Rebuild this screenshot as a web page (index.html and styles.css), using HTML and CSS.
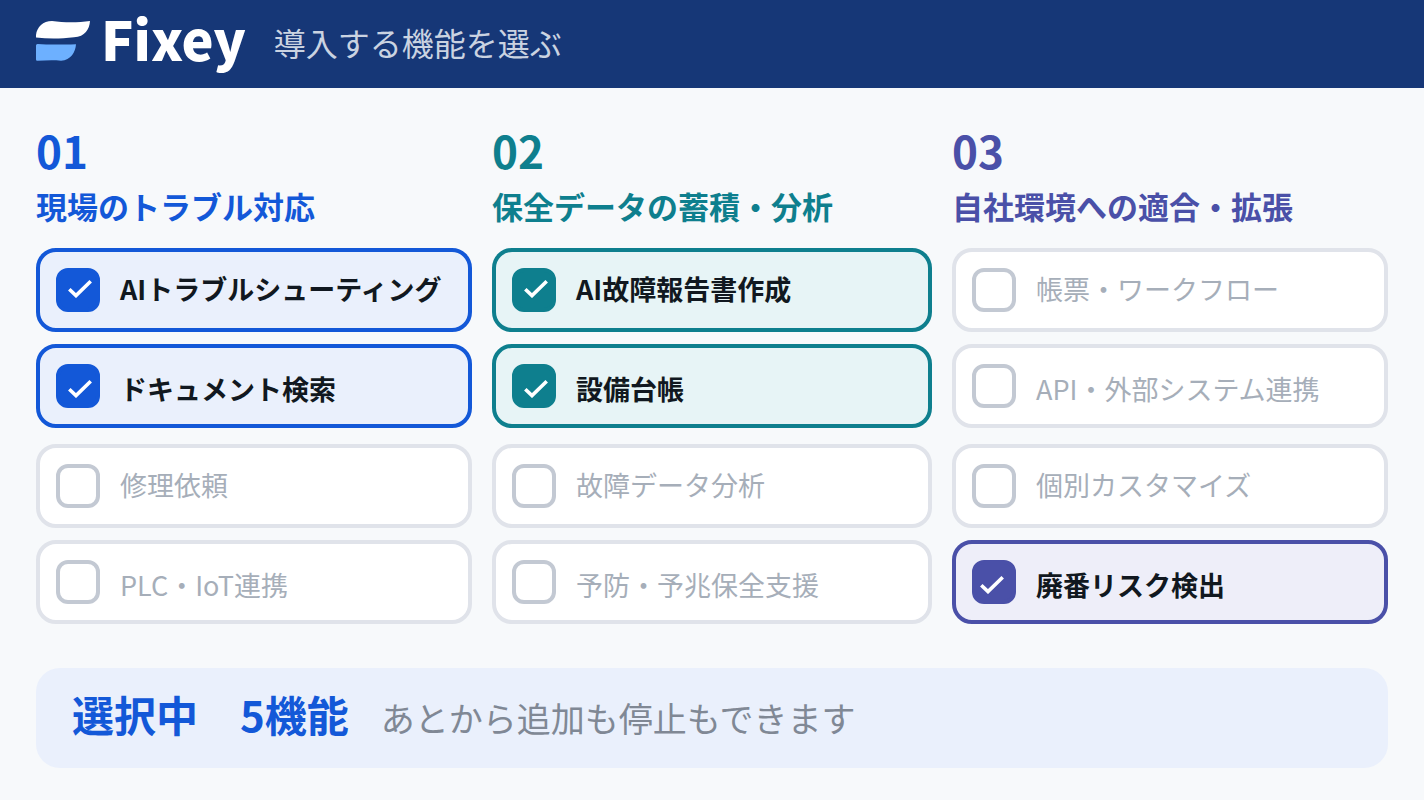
FILE: index.html
```
<!DOCTYPE html>
<html lang="ja">
<head>
<meta charset="utf-8">
<meta name="viewport" content="width=device-width, initial-scale=1">
<title>Fixey 導入する機能を選ぶ</title>
<link rel="stylesheet" href="styles.css">
</head>
<body>
<svg class="sprite" aria-hidden="true">
  <symbol id="tick" viewBox="0 0 24 18"><path d="M1.300 9.200L8 15.600L22.700 1.300"/></symbol>
</svg>
<header class="topbar">
  <svg class="logo" viewBox="0 0 54 42" aria-hidden="true">
    <path class="logo-upper" d="M0 17.500V15C1 7 7 1 16 1C28 2.700 42 2.700 54 1C53.500 9 49 17 38 17.300C24 19 12 19 0 17.500Z"/>
    <path class="logo-lower" d="M1.500 24C14 25 28 24.500 40 24.200C39.500 32 35 40 25 40.800C17 40 9 40.500 1.500 40.800Q0 41 0 39.500V25.500Q0 24 1.500 24Z"/>
  </svg>
  <span class="brand">Fixey</span>
  <h1 class="title">導入する機能を選ぶ</h1>
</header>
<main class="page">
  <div class="columns">
    <section class="group group-blue">
      <p class="number">01</p>
      <h2 class="heading">現場のトラブル対応</h2>
      <ul class="options">
        <li><label class="option"><span class="box"><input type="checkbox" checked><svg class="tick" aria-hidden="true"><use href="#tick"/></svg></span><span class="name">AIトラブルシューティング</span></label></li>
        <li><label class="option"><span class="box"><input type="checkbox" checked><svg class="tick" aria-hidden="true"><use href="#tick"/></svg></span><span class="name">ドキュメント検索</span></label></li>
        <li><label class="option"><span class="box"><input type="checkbox"><svg class="tick" aria-hidden="true"><use href="#tick"/></svg></span><span class="name">修理依頼</span></label></li>
        <li><label class="option"><span class="box"><input type="checkbox"><svg class="tick" aria-hidden="true"><use href="#tick"/></svg></span><span class="name">PLC・IoT連携</span></label></li>
      </ul>
    </section>
    <section class="group group-teal">
      <p class="number">02</p>
      <h2 class="heading">保全データの蓄積・分析</h2>
      <ul class="options">
        <li><label class="option"><span class="box"><input type="checkbox" checked><svg class="tick" aria-hidden="true"><use href="#tick"/></svg></span><span class="name">AI故障報告書作成</span></label></li>
        <li><label class="option"><span class="box"><input type="checkbox" checked><svg class="tick" aria-hidden="true"><use href="#tick"/></svg></span><span class="name">設備台帳</span></label></li>
        <li><label class="option"><span class="box"><input type="checkbox"><svg class="tick" aria-hidden="true"><use href="#tick"/></svg></span><span class="name">故障データ分析</span></label></li>
        <li><label class="option"><span class="box"><input type="checkbox"><svg class="tick" aria-hidden="true"><use href="#tick"/></svg></span><span class="name">予防・予兆保全支援</span></label></li>
      </ul>
    </section>
    <section class="group group-indigo">
      <p class="number">03</p>
      <h2 class="heading">自社環境への適合・拡張</h2>
      <ul class="options">
        <li><label class="option"><span class="box"><input type="checkbox"><svg class="tick" aria-hidden="true"><use href="#tick"/></svg></span><span class="name">帳票・ワークフロー</span></label></li>
        <li><label class="option"><span class="box"><input type="checkbox"><svg class="tick" aria-hidden="true"><use href="#tick"/></svg></span><span class="name">API・外部システム連携</span></label></li>
        <li><label class="option"><span class="box"><input type="checkbox"><svg class="tick" aria-hidden="true"><use href="#tick"/></svg></span><span class="name">個別カスタマイズ</span></label></li>
        <li><label class="option"><span class="box"><input type="checkbox" checked><svg class="tick" aria-hidden="true"><use href="#tick"/></svg></span><span class="name">廃番リスク検出</span></label></li>
      </ul>
    </section>
  </div>
  <div class="summary">
    <strong class="count">選択中　5機能</strong>
    <span class="note">あとから追加も停止もできます</span>
  </div>
</main>
</body>
</html>
```
FILE: styles.css
```
* {
  box-sizing: border-box;
}

body {
  margin: 0;
  background: #f7f9fb;
  color: #111820;
  font-family: "Noto Sans CJK JP", sans-serif;
}

h1, h2, p, ul {
  margin: 0;
  padding: 0;
}

.sprite {
  position: absolute;
  width: 0;
  height: 0;
}

.topbar {
  display: flex;
  align-items: center;
  height: 88px;
  padding: 0 36px;
  background: #163777;
}

.logo {
  width: 54px;
  height: 42px;
  margin-right: 11px;
  margin-bottom: 6px;
}

.logo-upper {
  fill: #fff;
}

.logo-lower {
  fill: #6db0ff;
}

.brand {
  margin-right: 28px;
  padding-bottom: 12px;
  color: #fff;
  font-size: 54px;
  font-weight: 900;
  line-height: 76px;
}

.title {
  padding-bottom: 4px;
  color: #cad3e1;
  font-size: 32px;
  font-weight: 400;
  line-height: 48px;
}

.page {
  padding: 34px 36px 32px;
}

.columns {
  display: grid;
  grid-template-columns: 109fr 110fr 109fr;
  gap: 20px;
}

.group-blue {
  --accent: #1358d8;
  --tint: #eaf0fc;
}

.group-teal {
  --accent: #0e7f8e;
  --tint: #e7f4f6;
}

.group-indigo {
  --accent: #4a50a8;
  --tint: #eeeef9;
  --tick-left: 8px;
}

.number {
  color: var(--accent);
  font-size: 44px;
  font-weight: 700;
  line-height: 56px;
}

.heading {
  padding-top: 4px;
  color: var(--accent);
  font-size: 31px;
  font-weight: 700;
  line-height: 48px;
  white-space: nowrap;
}

.options {
  display: grid;
  gap: 12px;
  padding-top: 18px;
  list-style: none;
}

.options li:nth-child(3) {
  margin-top: 4px;
}

.option {
  display: flex;
  align-items: center;
  gap: 20px;
  height: 84px;
  padding: 0 16px;
  border: 4px solid #e0e3ea;
  border-radius: 20px;
  background: #fff;
  color: #a6aeb9;
  font-size: 27px;
  line-height: 40px;
}

.option:has(input:checked) {
  border-color: var(--accent);
  background: var(--tint);
  color: #111820;
  font-weight: 700;
}

.name {
  padding-bottom: 2px;
  white-space: nowrap;
}

.options li:nth-child(even) {
  --tick-top: 16px;
}

.options li:nth-child(even) .name {
  padding-top: 8px;
}

.box {
  position: relative;
  display: flex;
  flex: none;
}

.box input {
  appearance: none;
  width: 44px;
  height: 44px;
  margin: 0;
  border: 4px solid #c3c9d3;
  border-radius: 12px;
  background: #fff;
}

.box input:checked {
  border-color: var(--accent);
  background: var(--accent);
}

.tick {
  position: absolute;
  top: var(--tick-top, 12px);
  left: var(--tick-left, 12px);
  display: none;
  width: 24px;
  height: 18px;
  fill: none;
  stroke: #fff;
  stroke-width: 3.600;
}

input:checked + .tick {
  display: block;
}

.summary {
  display: flex;
  align-items: center;
  gap: 32px;
  min-height: 100px;
  margin-top: 44px;
  padding: 0 36px;
  border-radius: 24px;
  background: #eaf0fc;
}

.count {
  padding-bottom: 8px;
  color: #1358d8;
  font-size: 42px;
  font-weight: 700;
  line-height: 60px;
}

.note {
  color: #808895;
  font-size: 34px;
  line-height: 48px;
}
```
